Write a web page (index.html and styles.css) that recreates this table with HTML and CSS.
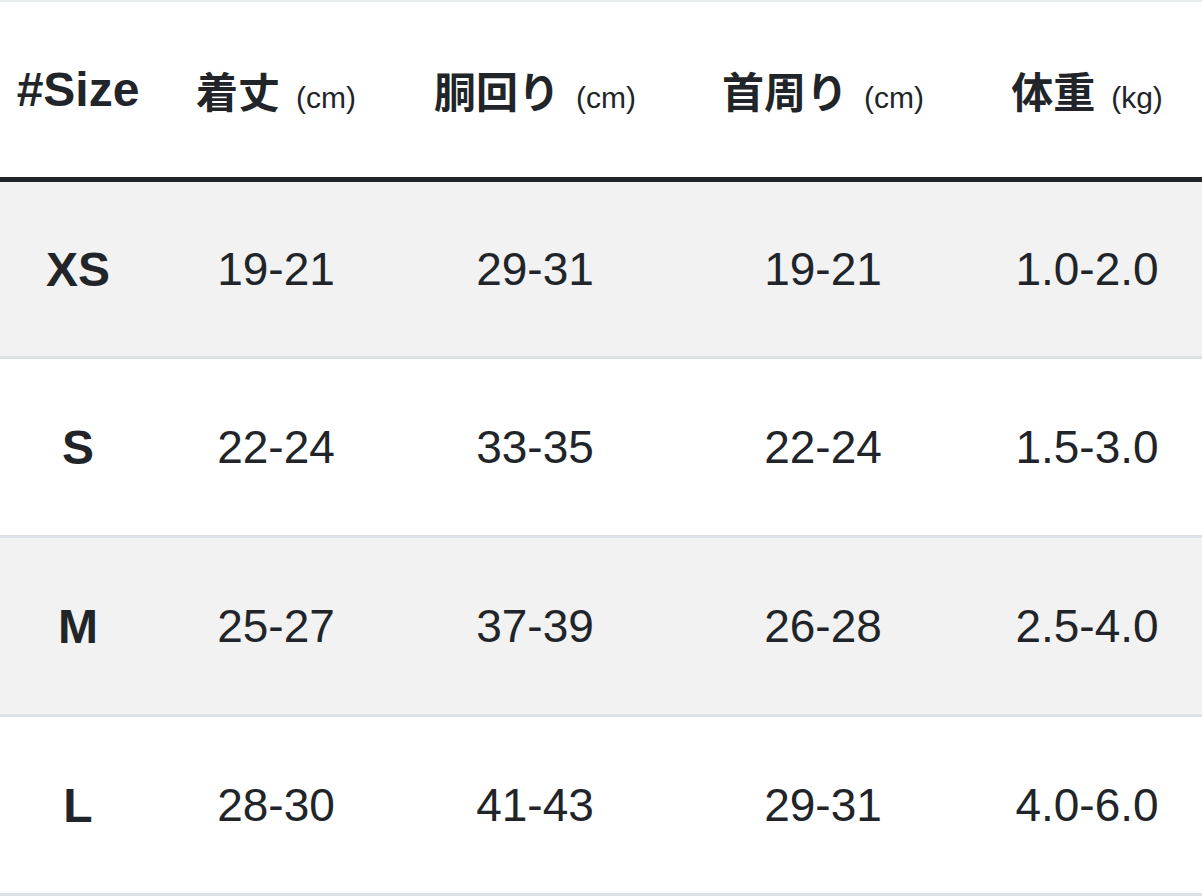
FILE: index.html
```html
<!DOCTYPE html>
<html lang="ja">
<head>
<meta charset="utf-8">
<title>Size</title>
<link rel="stylesheet" href="styles.css">
</head>
<body>
<div class="size-table">
  <div class="row head">
    <div class="cell label">#Size</div>
    <div class="cell"><span class="jp">着丈</span><span class="unit">(cm)</span></div>
    <div class="cell"><span class="jp">胴回り</span><span class="unit">(cm)</span></div>
    <div class="cell"><span class="jp">首周り</span><span class="unit">(cm)</span></div>
    <div class="cell"><span class="jp">体重</span><span class="unit">(kg)</span></div>
  </div>
  <div class="row body shade first">
    <div class="cell label">XS</div>
    <div class="cell">19-21</div>
    <div class="cell">29-31</div>
    <div class="cell">19-21</div>
    <div class="cell">1.0-2.0</div>
  </div>
  <div class="row body">
    <div class="cell label">S</div>
    <div class="cell">22-24</div>
    <div class="cell">33-35</div>
    <div class="cell">22-24</div>
    <div class="cell">1.5-3.0</div>
  </div>
  <div class="row body shade">
    <div class="cell label">M</div>
    <div class="cell">25-27</div>
    <div class="cell">37-39</div>
    <div class="cell">26-28</div>
    <div class="cell">2.5-4.0</div>
  </div>
  <div class="row body">
    <div class="cell label">L</div>
    <div class="cell">28-30</div>
    <div class="cell">41-43</div>
    <div class="cell">29-31</div>
    <div class="cell">4.0-6.0</div>
  </div>
</div>
</body>
</html>
```

FILE: styles.css
```css
html, body {
  margin: 0;
  padding: 0;
  background: #ffffff;
}

body {
  font-family: "Liberation Sans", Arial, "Noto Sans CJK JP", sans-serif;
  color: #212529;
  width: 1202px;
  height: 896px;
  overflow: hidden;
}

.size-table {
  width: 1202px;
  border-top: 2px solid #e9ecef;
}

.row {
  display: grid;
  grid-template-columns: 156px 240px 278px 298px 1fr;
  align-items: center;
}

.cell {
  text-align: center;
  white-space: nowrap;
}

.head {
  height: 175px;
  border-bottom: 5px solid #212529;
}

.body {
  height: 176px;
  border-bottom: 3px solid #dee2e6;
  font-size: 46px;
  background: #ffffff;
}

.body.first {
  height: 174px;
}

.shade {
  background: #f2f2f2;
}

.label {
  font-weight: bold;
  font-size: 48px;
}

.jp {
  font-family: "Noto Sans CJK JP", sans-serif;
  font-weight: bold;
  font-size: 42px;
}

.unit {
  font-size: 30px;
  margin-left: 16px;
}
```
